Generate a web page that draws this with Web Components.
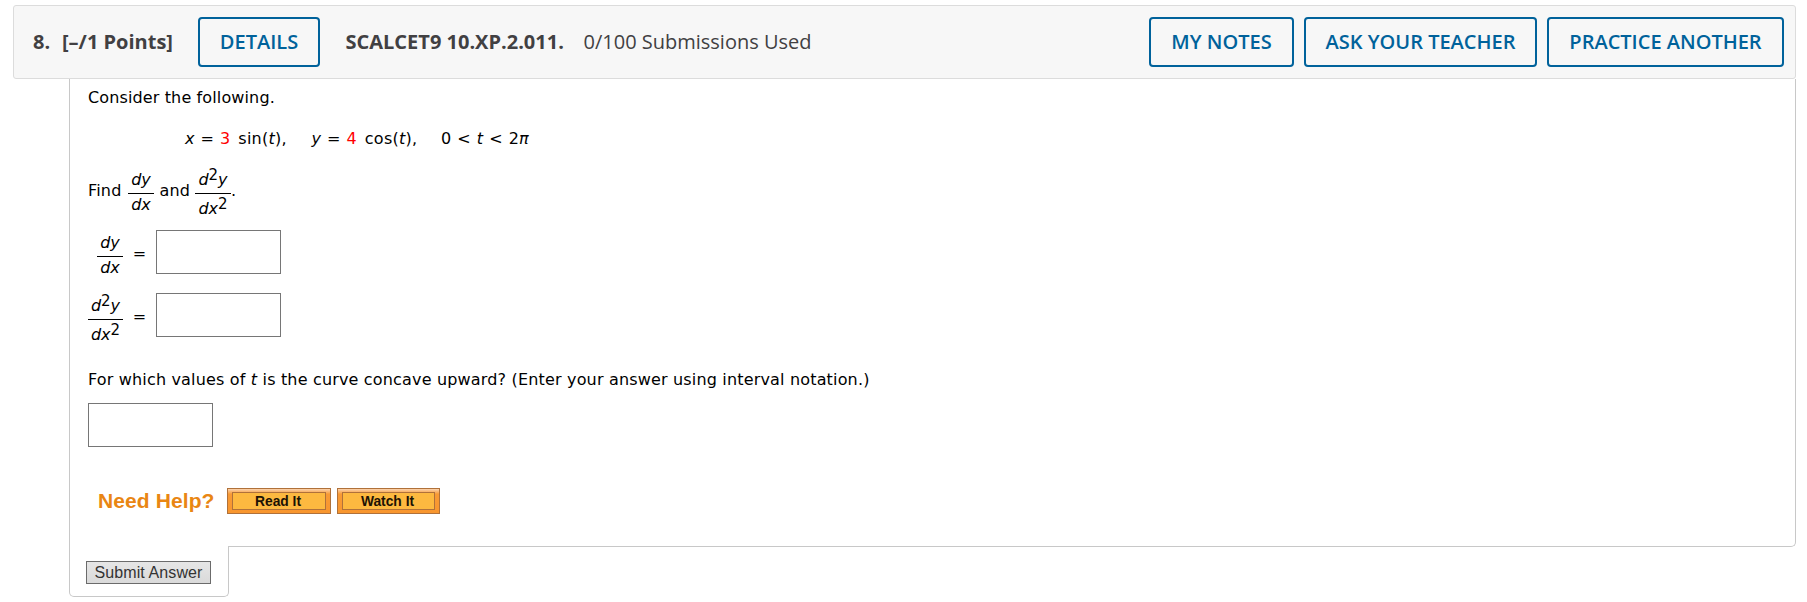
<!DOCTYPE html>
<html lang="en">
<head>
<meta charset="utf-8">
<title>Question 8</title>
<style>
    body {
        margin: 0;
        background: #fff;
        color: #000;
        font-family: Verdana, "DejaVu Sans", sans-serif;
        font-size: 16px;
    }
</style>
</head>
<body>
<question-box>
    <question-header slot="header" number="8." points="[–/1 Points]" code="SCALCET9 10.XP.2.011." used="0/100 Submissions Used"></question-header>
    <text-line style="letter-spacing: 0.13px">Consider the following.</text-line>
    <param-equation></param-equation>
    <find-line></find-line>
    <answer-row order="1"></answer-row>
    <answer-row order="2"></answer-row>
    <text-line style="margin: 14px 0 4px">For which values of <i>t</i> is the curve concave upward? (Enter your answer using interval notation.)</text-line>
    <answer-input></answer-input>
    <need-help></need-help>
    <submit-button slot="submit">Submit Answer</submit-button>
</question-box>

<script>
// attach an open shadow root with the given markup
function build(el, html) {
    const template = document.createElement('template');
    template.innerHTML = html;
    el.attachShadow({ mode: 'open' });
    el.shadowRoot.appendChild(template.content.cloneNode(true));
}

class QuestionBox extends HTMLElement {
    constructor() {
        super();
        build(this, `<style>
            :host { display: block; width: 1783px; padding: 5px 0 0 13px; }
            .panel {
                box-sizing: border-box;
                height: 468px;
                margin-left: 56px;
                padding: 0 18px;
                border: 1px solid #c8c8c8;
                border-top: 0;
                border-radius: 0 0 5px 0;
            }
            .tab {
                position: relative;
                box-sizing: border-box;
                width: 160px;
                height: 51px;
                margin: -1px 0 0 56px;
                padding: 15px 0 0 16px;
                background: #fff;
                border: 1px solid #c8c8c8;
                border-top: 0;
                border-radius: 0 0 5px 5px;
            }
        </style>
        <slot name="header"></slot>
        <div class="panel"><slot></slot></div>
        <div class="tab"><slot name="submit"></slot></div>`);
    }
}

class OutlineButton extends HTMLElement {
    constructor() {
        super();
        build(this, `<style>
            :host { display: block; }
            button {
                display: block;
                box-sizing: border-box;
                width: 100%;
                height: 50px;
                padding: 0;
                border: 2px solid #00629b;
                border-radius: 4px;
                background: #f7f7f7;
                color: #00629b;
                font: 600 20px/46px "Open Sans", sans-serif;
                white-space: nowrap;
            }
        </style>
        <button><slot></slot></button>`);
    }
}

class QuestionHeader extends HTMLElement {
    constructor() {
        super();
        build(this, `<style>
            :host {
                display: flex;
                align-items: center;
                box-sizing: border-box;
                height: 74px;
                padding: 0 11px 0 19px;
                background: #f7f7f7;
                border: 1px solid #dcdcdc;
                border-radius: 3px;
                color: #414042;
                font: 20px/28px "Open Sans", sans-serif;
                white-space: nowrap;
            }
            b { font-weight: 700; }
            .number { width: 29px; }
            .points { width: 136px; }
            .code { width: 238px; margin-left: 25.5px; }
            .actions { display: flex; gap: 10px; margin-left: auto; }
        </style>
        <b class="number"></b>
        <b class="points"></b>
        <outline-button style="width:122px">DETAILS</outline-button>
        <b class="code"></b>
        <span class="used"></span>
        <div class="actions">
            <outline-button style="width:145px">MY NOTES</outline-button>
            <outline-button style="width:233px">ASK YOUR TEACHER</outline-button>
            <outline-button style="width:237px">PRACTICE ANOTHER</outline-button>
        </div>`);
    }
    connectedCallback() {
        for (const name of ['number', 'points', 'code', 'used']) {
            this.shadowRoot.querySelector('.' + name).textContent = this.getAttribute(name);
        }
    }
}

class TextLine extends HTMLElement {
    constructor() {
        super();
        build(this, `<style>
            :host { display: block; height: 38px; line-height: 38px; letter-spacing: 0.17px; white-space: nowrap; }
        </style><slot></slot>`);
    }
}

class ParamEquation extends HTMLElement {
    constructor() {
        super();
        build(this, `<style>
            :host {
                display: flex;
                height: 42px;
                padding-left: 97px;
                line-height: 44px;
                letter-spacing: 0.25px;
                word-spacing: 0.5px;
                white-space: pre;
            }
            em { margin-right: 2px; color: #f00; font-style: normal; }
            span:nth-of-type(1) { width: 126.5px; }
            span:nth-of-type(2) { width: 129.5px; }
        </style>
        <span><i>x</i> = <em>3</em> sin(<i>t</i>),</span><span><i>y</i> = <em>4</em> cos(<i>t</i>),</span><span>0 &lt; <i>t</i> &lt; 2<i>π</i></span>`);
    }
}

class DerivFraction extends HTMLElement {
    constructor() {
        super();
        build(this, `<style>
            :host { display: block; width: 26px; text-align: center; font-style: italic; line-height: 20px; white-space: nowrap; }
            .top { height: 23px; padding-top: 3px; border-bottom: 1px solid #000; }
            .bottom { height: 26px; padding-top: 1px; }
            sup { display: none; font-style: normal; font-size: 15px; line-height: 0; vertical-align: 5px; }
            :host([order="2"]) { width: 35px; }
            :host([order="2"]) .bottom { padding-top: 5px; }
            :host([order="2"]) sup { display: inline; }
        </style>
        <div class="top">d<sup>2</sup>y</div>
        <div class="bottom">dx<sup>2</sup></div>`);
    }
}

class FindLine extends HTMLElement {
    constructor() {
        super();
        build(this, `<style>
            :host { display: flex; height: 62px; letter-spacing: 0.17px; }
            span { line-height: 64px; }
            .find { width: 40px; }
            .and { width: 36px; padding-left: 5.5px; margin-right: -0.5px; }
            deriv-fraction { margin-top: 8px; letter-spacing: 0; }
            deriv-fraction[order="2"] { width: 36px; }
        </style>
        <span class="find">Find</span>
        <deriv-fraction order="1"></deriv-fraction>
        <span class="and">and</span>
        <deriv-fraction order="2"></deriv-fraction>
        <span>.</span>`);
    }
}

class AnswerInput extends HTMLElement {
    constructor() {
        super();
        build(this, `<style>
            :host { display: block; }
            input { display: block; box-sizing: border-box; width: 125px; height: 44px; margin: 0; border: 1px solid #767676; background: #fff; }
        </style><input type="text">`);
    }
}

class AnswerRow extends HTMLElement {
    constructor() {
        super();
        build(this, `<style>
            :host { display: flex; box-sizing: border-box; height: 63px; padding-top: 9px; }
            .frac { display: flex; justify-content: flex-end; width: 35px; }
            .eq { width: 33px; text-align: center; line-height: 48px; }
        </style>
        <div class="frac"><deriv-fraction></deriv-fraction></div>
        <span class="eq">=</span>
        <answer-input></answer-input>`);
    }
    connectedCallback() {
        this.shadowRoot.querySelector('deriv-fraction').setAttribute('order', this.getAttribute('order'));
    }
}

class HelpButton extends HTMLElement {
    constructor() {
        super();
        build(this, `<style>
            :host { display: block; }
            button {
                display: block;
                box-sizing: border-box;
                width: 100%;
                height: 26px;
                padding: 3px 4px;
                border: 1px solid #b0713a;
                background: linear-gradient(#fbd3ae, #f89a35 5px, #f8962e);
            }
            span {
                display: block;
                box-sizing: border-box;
                height: 18px;
                padding-right: 2px;
                border: 1px solid #b0713a;
                background: #fdb940;
                color: #1c1204;
                font: bold 13.8px/18px "Liberation Sans", sans-serif;
            }
        </style><button><span><slot></slot></span></button>`);
    }
}

class NeedHelp extends HTMLElement {
    constructor() {
        super();
        build(this, `<style>
            :host { display: flex; height: 26px; padding: 41px 0 0 10px; }
            b { width: 129px; color: #e98613; font: bold 21px/25px "Liberation Sans", sans-serif; letter-spacing: 0.1px; white-space: nowrap; }
            help-button + help-button { margin-left: 6px; }
        </style>
        <b>Need Help?</b>
        <help-button style="width:104px">Read It</help-button>
        <help-button style="width:103px">Watch It</help-button>`);
    }
}

class SubmitButton extends HTMLElement {
    constructor() {
        super();
        build(this, `<style>
            :host { display: block; }
            button {
                display: block;
                box-sizing: border-box;
                width: 125px;
                height: 23px;
                padding: 0;
                border: 1px solid #6b6b6b;
                background: linear-gradient(#e6e6e6, #dadada);
                color: #333;
                font: 16px/21px "Liberation Sans", sans-serif;
                letter-spacing: 0.1px;
                white-space: nowrap;
            }
        </style><button><slot></slot></button>`);
    }
}

customElements.define('outline-button', OutlineButton);
customElements.define('answer-input', AnswerInput);
customElements.define('deriv-fraction', DerivFraction);
customElements.define('help-button', HelpButton);
customElements.define('question-header', QuestionHeader);
customElements.define('text-line', TextLine);
customElements.define('param-equation', ParamEquation);
customElements.define('find-line', FindLine);
customElements.define('answer-row', AnswerRow);
customElements.define('need-help', NeedHelp);
customElements.define('submit-button', SubmitButton);
customElements.define('question-box', QuestionBox);
</script>
</body>
</html>
